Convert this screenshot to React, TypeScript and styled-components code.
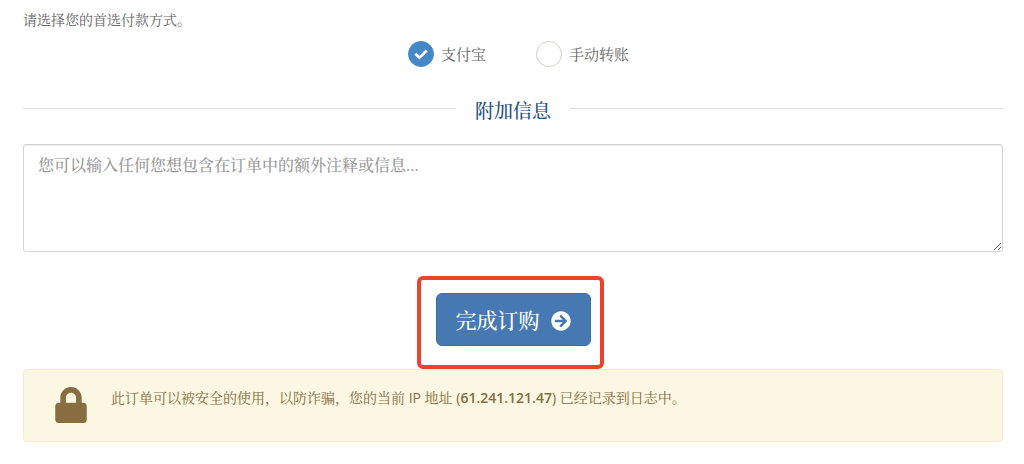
import React from "react";
import styled, { createGlobalStyle } from "styled-components";
import { FaArrowCircleRight, FaLock } from "react-icons/fa";

const GlobalStyle = createGlobalStyle`
  *, *::before, *::after { box-sizing: border-box; }
  body {
    margin: 0;
    background: #fff;
    color: #666;
    font-family: "Open Sans", "Noto Serif CJK SC", "Songti SC", "Noto Sans CJK SC", sans-serif;
    font-size: 14px;
    line-height: 20px;
  }
`;

const Page = styled.form`
  display: flex;
  flex-direction: column;
  padding: 10px 21px 22px 23px;
`;

const Methods = styled.fieldset`
  margin: 0;
  padding: 0;
  border: 0;
`;

const Prompt = styled.legend`
  padding: 0;
`;

const Options = styled.div`
  display: flex;
  justify-content: center;
  gap: 50px;
  padding: 11px 0 0 11px;
`;

const Option = styled.label`
  display: flex;
  align-items: center;
  gap: 7px;
  font-size: 15px;
  line-height: 26px;
  cursor: pointer;
`;

const RadioBox = styled.span`
  display: grid;
  width: 26px;
  height: 26px;
  align-items: center;

  > * {
    grid-area: 1 / 1;
  }
`;

const Radio = styled.input`
  appearance: none;
  width: 26px;
  height: 26px;
  margin: 0;
  border: 1px solid #d2d0c9;
  border-radius: 50%;
  background: #fff;

  &:checked {
    border-color: #4489c6;
    background: #4489c6;
  }
  &:not(:checked) + svg {
    visibility: hidden;
  }
`;

const Tick = styled.svg`
  width: 26px;
  height: 26px;
  fill: none;
  stroke: #fff;
  stroke-width: 2.7;
  pointer-events: none;
`;

const SectionTitle = styled.h2`
  display: flex;
  gap: 19px;
  margin: 30px 0 19px;
  color: #1f5288;
  font-size: 19px;
  font-weight: 500;
  line-height: 28px;

  &::before,
  &::after {
    content: "";
    flex: 1;
    height: 1px;
    margin-top: 11px;
    background: #ddd;
  }
`;

const Notes = styled.textarea`
  display: block;
  width: 100%;
  height: 108px;
  padding: 8px 14px;
  border: 1px solid #d4d4d4;
  border-radius: 3px;
  box-shadow: inset 0 1px 1px rgba(0, 0, 0, 0.08);
  color: #555;
  font: inherit;
  font-size: 16px;
  font-weight: 500;
  line-height: 24px;
  resize: vertical;

  &::placeholder {
    color: #999;
    opacity: 1;
  }
`;

const Highlight = styled.div`
  position: relative;
  align-self: center;
  margin: 41px 0 23px;

  &::after {
    content: "";
    position: absolute;
    inset: -17px -13px -23px -19px;
    border: 4px solid #ec432b;
    border-radius: 6px;
    pointer-events: none;
  }
`;

const Submit = styled.button`
  display: flex;
  align-items: center;
  gap: 11px;
  padding: 12px 19px 10px;
  border: 1px solid #3b6ea8;
  border-radius: 6px;
  background: #4679b2;
  color: #fff;
  font: inherit;
  font-size: 21px;
  font-weight: 500;
  line-height: 29px;
  cursor: pointer;
`;

const Notice = styled.div`
  display: flex;
  gap: 22px;
  min-height: 73px;
  padding: 17px 29px;
  border: 1px solid #f8ebcc;
  border-radius: 4px;
  background: #fbf7e3;
  color: #876d40;

  p {
    margin: 0;
    padding-top: 1px;
  }
  strong {
    font-weight: 600;
  }
`;

export default function App() {
  return (
    <>
      <GlobalStyle />
      <Page onSubmit={(e) => e.preventDefault()}>
        <Methods>
          <Prompt>请选择您的首选付款方式。</Prompt>
          <Options>
            {["支付宝", "手动转账"].map((name, i) => (
              <Option key={name}>
                <RadioBox>
                  <Radio type="radio" name="payment" value={name} defaultChecked={i === 0} />
                  <Tick viewBox="0 0 25 25" aria-hidden="true">
                    <path d="M7 12.3 11 16 18 9.2" />
                  </Tick>
                </RadioBox>
                {name}
              </Option>
            ))}
          </Options>
        </Methods>
        <SectionTitle id="notes-title">附加信息</SectionTitle>
        <Notes
          aria-labelledby="notes-title"
          placeholder="您可以输入任何您想包含在订单中的额外注释或信息..."
        />
        <Highlight>
          <Submit type="submit">
            完成订购
            <FaArrowCircleRight size={20} aria-hidden="true" />
          </Submit>
        </Highlight>
        <Notice>
          <FaLock size={36} aria-hidden="true" />
          <p>
            此订单可以被安全的使用，以防诈骗，您的当前 IP 地址 (<strong>61.241.121.47</strong>) 已经记录到日志中。
          </p>
        </Notice>
      </Page>
    </>
  );
}
